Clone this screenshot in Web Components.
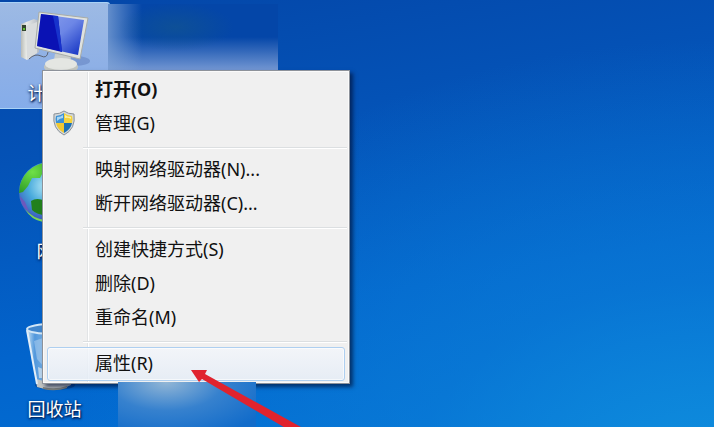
<!DOCTYPE html>
<html lang="zh-CN">
<head>
<meta charset="utf-8">
<title>桌面</title>
<style>
  body {
    margin: 0;
    font-family: "Noto Sans", "Noto Sans CJK SC", sans-serif;
    font-size: 18px;
  }
</style>
</head>
<body>
<win-desktop>
  <desktop-icon label="计算机" selected>
    <svg width="72" height="72" viewBox="0 0 72 72">
      <defs>
        <linearGradient id="screen" x1="0" y1="0" x2="1" y2="1">
          <stop offset="0" stop-color="#8fa4ee"/>
          <stop offset="0.5" stop-color="#6c86e6"/>
          <stop offset="1" stop-color="#0c2cc0"/>
        </linearGradient>
        <linearGradient id="tower" x1="0" x2="1">
          <stop offset="0" stop-color="#b9bcb8"/>
          <stop offset="0.3" stop-color="#e9ebe8"/>
          <stop offset="1" stop-color="#b4bac4"/>
        </linearGradient>
      </defs>
      <ellipse cx="56" cy="55" rx="15" ry="5" fill="#4a68a8" opacity="0.35"/>
      <path d="M2 18 L15 13 L20 15 L20 46 L8 54 L2 51 Z" fill="url(#tower)"/>
      <path d="M7 20 L18 16 V47 L8 53 Z" fill="#d9dcdd"/>
      <rect x="3" y="19" width="4" height="6" fill="#33452f"/>
      <rect x="4" y="22" width="2" height="2" fill="#5fc030"/>
      <path d="M10 53 Q16 47 22 50 T29 46" fill="none" stroke="#5c6474" stroke-width="1"/>
      <path d="M36 48 L52 49 L51 60 L34 60 Z" fill="#c9cdcb"/>
      <ellipse cx="42" cy="61" rx="17" ry="7" fill="#c3c6c0"/>
      <ellipse cx="42" cy="58" rx="16" ry="6" fill="#e4e6e2"/>
      <path d="M20 6 L69 12 L61 53 L16 42 Z" fill="#dfe2df" stroke="#a8aca8"/>
      <path d="M22 8 L65 14 L59 49 L18 40 Z" fill="url(#screen)"/>
      <path d="M22 8 L39 10 L43 46 L18 40 Z" fill="#0a12b4"/>
      <path d="M34 10 L39 10 L43 46 L41 45 Z" fill="#1733cc"/>
    </svg>
  </desktop-icon>
  <desktop-icon label="网络">
    <svg width="72" height="72" viewBox="0 5 72 72">
      <defs>
        <radialGradient id="sea" cx="0.45" cy="0.4" r="0.6">
          <stop offset="0" stop-color="#b8eaf8"/>
          <stop offset="0.5" stop-color="#48aadc"/>
          <stop offset="1" stop-color="#3a50b8"/>
        </radialGradient>
        <radialGradient id="land" cx="0.4" cy="0.3" r="0.8">
          <stop offset="0" stop-color="#6fe048"/>
          <stop offset="1" stop-color="#2a9826"/>
        </radialGradient>
      </defs>
      <circle cx="30" cy="33" r="30" fill="url(#sea)"/>
      <path d="M1 26 Q6 9 24 4 Q32 4 34 9 L24 13 L21 19 L13 19 L9 27 L4 33 L0 34 Z" fill="url(#land)"/>
      <path d="M12 42 Q18 38 26 42 L27 56 Q18 56 13 51 Z" fill="#22801c"/>
      <path d="M6 50 Q14 60 27 61 L24 63 Q12 61 6 50 Z" fill="#7ad456"/>
      <path d="M1 37 L6 43 L10 53 Q1 46 1 37 Z" fill="#6d58bd"/>
    </svg>
  </desktop-icon>
  <desktop-icon label="回收站">
    <svg width="72" height="72" viewBox="0 1 72 72">
      <defs>
        <linearGradient id="glass" x1="0" x2="1">
          <stop offset="0" stop-color="#c8e2f4"/>
          <stop offset="0.15" stop-color="#5298dc"/>
          <stop offset="0.5" stop-color="#90bfe8"/>
          <stop offset="1" stop-color="#d8e8f4"/>
        </linearGradient>
      </defs>
      <ellipse cx="36" cy="64" rx="20" ry="5" fill="#003078" opacity="0.5"/>
      <path d="M8 8 L60 8 L52 62 Q36 72 18 64 Z" fill="url(#glass)"/>
      <path d="M17 58 Q34 64 53 57 L52 64 Q36 72 18 66 Z" fill="#c2c4c2"/>
      <path d="M24 66 Q36 69 48 65 L48 67 Q36 71 24 68 Z" fill="#7e827e"/>
      <path d="M8 9 L18 63" stroke="#e2eef8" stroke-width="2"/>
      <path d="M15 20 L24 17 L25 46 L18 38 Z" fill="#b5d4f0" opacity="0.5"/>
      <path d="M19 46 L24 48 L25 57 L20 57 Z" fill="#d8e6f0" opacity="0.7"/>
      <ellipse cx="34" cy="8" rx="26" ry="5" fill="#4286cc" stroke="#d2e6f6" stroke-width="2"/>
    </svg>
  </desktop-icon>

  <smudge-patch class="top" slot="overlay"></smudge-patch>
  <context-menu slot="overlay">
    <menu-item primary>打开(O)</menu-item>
    <menu-item>
      <svg slot="icon" width="24" height="26" viewBox="0 0 24 26">
        <path d="M12 1 Q16 4 22 4 Q24 19 12 25 Q0 19 2 4 Q8 4 12 1 Z" fill="#d4d8da" stroke="#8b9298"/>
        <path d="M12 3 V13 H4 Q3 9 4 6 Q8 6 12 3 Z" fill="#3d92d6"/>
        <path d="M12 3 Q16 6 20 6 Q21 9 20 13 H12 Z" fill="#f3d23c"/>
        <path d="M4 13 H12 V23 Q5 19 4 13 Z" fill="#f0c832"/>
        <path d="M20 13 H12 V23 Q19 19 20 13 Z" fill="#1c70b4"/>
        <path d="M5 7 Q9 7 11 5 V8 Q8 8 5 11 Z" fill="#a9d6f2"/>
        <path d="M13 5 Q15 7 19 7 V9 Q16 7 13 8 Z" fill="#fbf0a4"/>
      </svg>
      管理(G)
    </menu-item>
    <menu-separator></menu-separator>
    <menu-item>映射网络驱动器(N)...</menu-item>
    <menu-item>断开网络驱动器(C)...</menu-item>
    <menu-separator></menu-separator>
    <menu-item>创建快捷方式(S)</menu-item>
    <menu-item>删除(D)</menu-item>
    <menu-item>重命名(M)</menu-item>
    <menu-separator></menu-separator>
    <menu-item active>属性(R)</menu-item>
  </context-menu>
  <smudge-patch class="bottom" slot="overlay"></smudge-patch>
  <pointer-arrow slot="overlay"></pointer-arrow>
</win-desktop>

<script>
class WinDesktop extends HTMLElement {
  constructor() {
    super();
    this.attachShadow({ mode: 'open' });

    this.shadowRoot.innerHTML = `
      <style>
        :host {
          display: block;
          position: relative;
          box-sizing: border-box;
          height: 100vh;
          overflow: hidden;
          padding-top: 2px;
          background:
            radial-gradient(ellipse at 100% 115%, #1090de 0%, rgba(14, 130, 216, 0.5) 30%, rgba(10, 110, 210, 0) 65%),
            linear-gradient(170deg, #0446a8 0%, #0452b6 30%, #0264cc 65%, #0272d6 100%);
        }

        .icons {
          display: flex;
          flex-direction: column;
          align-items: flex-start;
          gap: 51px;
        }

        /* things that float over the desktop */
        ::slotted(context-menu) {
          position: absolute;
          left: 42px;
          top: 70px;
        }

        ::slotted(smudge-patch) {
          position: absolute;
        }

        ::slotted(.top) {
          left: 108px;
          top: 4px;
          width: 170px;
          height: 66px;
          background:
            radial-gradient(ellipse at 40% 35%, rgba(20, 86, 140, 0.6), rgba(20, 90, 140, 0) 40%),
            linear-gradient(90deg, rgba(130, 165, 215, 0.75), rgba(80, 130, 200, 0) 20%),
            linear-gradient(180deg, rgba(120, 155, 210, 0) 50%, #7296d2 100%),
            #0446a8;
        }

        ::slotted(.bottom) {
          left: 118px;
          top: 382px;
          width: 138px;
          height: 45px;
          background:
            radial-gradient(ellipse at 35% 0%, rgba(160, 190, 215, 0.9), rgba(90, 150, 210, 0.5) 45%, rgba(30, 115, 205, 0) 90%),
            #126cca;
        }

        ::slotted(pointer-arrow) {
          position: absolute;
          left: 190px;
          top: 368px;
        }
      </style>

      <div class="icons"><slot></slot></div>
      <slot name="overlay"></slot>
    `;
  }
}

class DesktopIcon extends HTMLElement {
  constructor() {
    super();
    this.attachShadow({ mode: 'open' });

    this.shadowRoot.innerHTML = `
      <style>
        :host {
          display: flex;
          flex-direction: column;
          align-items: center;
          box-sizing: border-box;
          width: 110px;
          padding: 3px 0 2px;
          border: 1px solid transparent;
          border-left: 0;
        }

        :host([selected]) {
          background: linear-gradient(180deg, #9dbae4, #8eb0e6 60%, #85adea);
          border-color: #a9d2f6;
          border-radius: 0 3px 3px 0;
        }

        ::slotted(svg) {
          display: block;
          overflow: visible;
        }

        .label {
          margin-top: 2px;
          line-height: 26px;
          color: white;
          text-shadow: 1px 1px 2px #001c50, 0 1px 3px #001c50;
        }
      </style>

      <slot></slot>
      <span class="label">${this.getAttribute('label')}</span>
    `;
  }
}

class SmudgePatch extends HTMLElement {
  constructor() {
    super();
    this.attachShadow({ mode: 'open' });
    this.shadowRoot.innerHTML = `<style>:host { display: block; }</style>`;
  }
}

class ContextMenu extends HTMLElement {
  constructor() {
    super();
    this.attachShadow({ mode: 'open' });

    this.shadowRoot.innerHTML = `
      <style>
        :host {
          display: block;
          box-sizing: border-box;
          min-width: 308px;
          padding: 2px;
          border: 1px solid #8d929a;
          background: linear-gradient(90deg, transparent 45px, #e2e4e6 45px, #e2e4e6 46px, white 46px, white 47px, transparent 47px), #f0f0f0;
          background-origin: border-box;
          box-shadow: inset 0 0 0 1px #fafafa, 3px 3px 4px rgba(0, 15, 50, 0.65);
        }
      </style>

      <div role="menu"><slot></slot></div>
    `;
  }
}

class MenuItem extends HTMLElement {
  constructor() {
    super();
    this.attachShadow({ mode: 'open' });

    this.shadowRoot.innerHTML = `
      <style>
        :host {
          display: block;
          padding: 0 2px;
        }

        button {
          display: grid;
          grid-template-columns: 28px 1fr;
          column-gap: 17px;
          align-items: center;
          box-sizing: border-box;
          width: 100%;
          height: 34px;
          padding: 0 2px 2px;
          border: 1px solid transparent;
          border-radius: 3px;
          background: none;
          color: #111;
          font: inherit;
          line-height: 24px;
          text-align: left;
          white-space: nowrap;
        }

        .icon {
          display: flex;
          justify-content: center;
        }

        :host([primary]) button {
          font-weight: bold;
        }

        :host([active]) button {
          border-color: #aecff0;
          background: linear-gradient(180deg, rgba(243, 246, 251, 0.8), rgba(228, 236, 246, 0.8));
          box-shadow: inset 0 0 0 1px rgba(255, 255, 255, 0.6);
        }
      </style>

      <button type="button" role="menuitem">
        <span class="icon"><slot name="icon"></slot></span>
        <span><slot></slot></span>
      </button>
    `;
  }
}

class MenuSeparator extends HTMLElement {
  constructor() {
    super();
    this.attachShadow({ mode: 'open' });

    this.shadowRoot.innerHTML = `
      <style>
        :host {
          display: block;
          padding: 6px 0 4px 38px;
        }

        hr {
          margin: 0;
          border: 0;
          border-top: 1px solid #dcdfe1;
          border-bottom: 1px solid white;
        }
      </style>

      <hr>
    `;
  }
}

class PointerArrow extends HTMLElement {
  constructor() {
    super();
    this.attachShadow({ mode: 'open' });

    this.shadowRoot.innerHTML = `
      <style>
        :host {
          display: block;
        }

        svg {
          display: block;
        }
      </style>

      <svg width="124" height="66" viewBox="0 0 124 66">
        <path d="M1 2 L17 2 L15 6 L120 64 L104 65 L12 11 L9 14 Z" fill="#e0232e"/>
      </svg>
    `;
  }
}

customElements.define('win-desktop', WinDesktop);
customElements.define('desktop-icon', DesktopIcon);
customElements.define('smudge-patch', SmudgePatch);
customElements.define('context-menu', ContextMenu);
customElements.define('menu-item', MenuItem);
customElements.define('menu-separator', MenuSeparator);
customElements.define('pointer-arrow', PointerArrow);
</script>
</body>
</html>
